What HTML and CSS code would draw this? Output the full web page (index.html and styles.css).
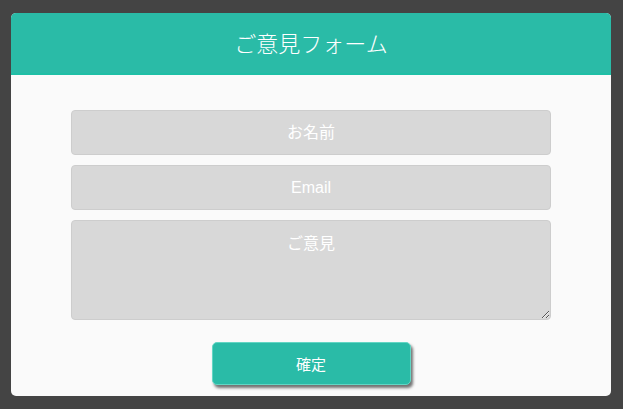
FILE: index.html
```html
<!DOCTYPE html>
<html lang="ja">
<head>
<meta charset="utf-8">
<link rel="stylesheet" href="styles.css">
</head>
<body>
<div class="card">
  <div class="card-header">ご意見フォーム</div>
  <form class="card-body">
    <input class="field" type="text" placeholder="お名前">
    <input class="field" type="text" placeholder="Email">
    <textarea class="field area" placeholder="ご意見"></textarea>
    <button class="submit" type="button">確定</button>
  </form>
</div>
</body>
</html>
```
FILE: styles.css
```css
html, body {
  margin: 0;
  padding: 0;
}
body {
  background: #444444;
  padding-top: 13px;
  font-family: "Liberation Sans", "Noto Sans CJK JP", sans-serif;
}
.card {
  width: 600px;
  height: 383px;
  margin: 0 0 0 11px;
  background: #fafafa;
  border-radius: 5px;
  overflow: hidden;
  display: flex;
  flex-direction: column;
}
.card-header {
  background: #2abba7;
  border-bottom: 2px solid #1fbfa6;
  color: #ffffff;
  font-family: "Noto Sans CJK JP", sans-serif;
  font-size: 22px;
  font-weight: 300;
  display: flex;
  align-items: center;
  justify-content: center;
  padding-bottom: 2px;
  box-sizing: border-box;
  height: 62px;
}
.card-body {
  display: flex;
  flex-direction: column;
  align-items: center;
  padding-top: 35px;
  gap: 10px;
  margin: 0;
}
.field {
  width: 480px;
  height: 45px;
  box-sizing: border-box;
  background: #d8d8d8;
  border: 1px solid #cdcdcd;
  border-radius: 4px;
  text-align: center;
  font-family: "Liberation Sans", "Noto Sans CJK JP", sans-serif;
  font-size: 16px;
  color: #ffffff;
  outline: none;
  margin: 0;
  padding: 0 10px;
}
.field::placeholder {
  color: #ffffff;
  opacity: 1;
}
.area {
  height: 100px;
  padding-top: 9px;
  resize: both;
  display: block;
}
.submit {
  margin-top: 12px;
  width: 199px;
  height: 43px;
  box-sizing: border-box;
  background: #2abba7;
  border: 1px solid #62d6c4;
  border-radius: 5px;
  color: #ffffff;
  font-family: "Noto Sans CJK JP", sans-serif;
  font-size: 15px;
  padding: 0;
  box-shadow: 2px 3px 3px rgba(0, 0, 0, 0.55);
  cursor: pointer;
}
```
